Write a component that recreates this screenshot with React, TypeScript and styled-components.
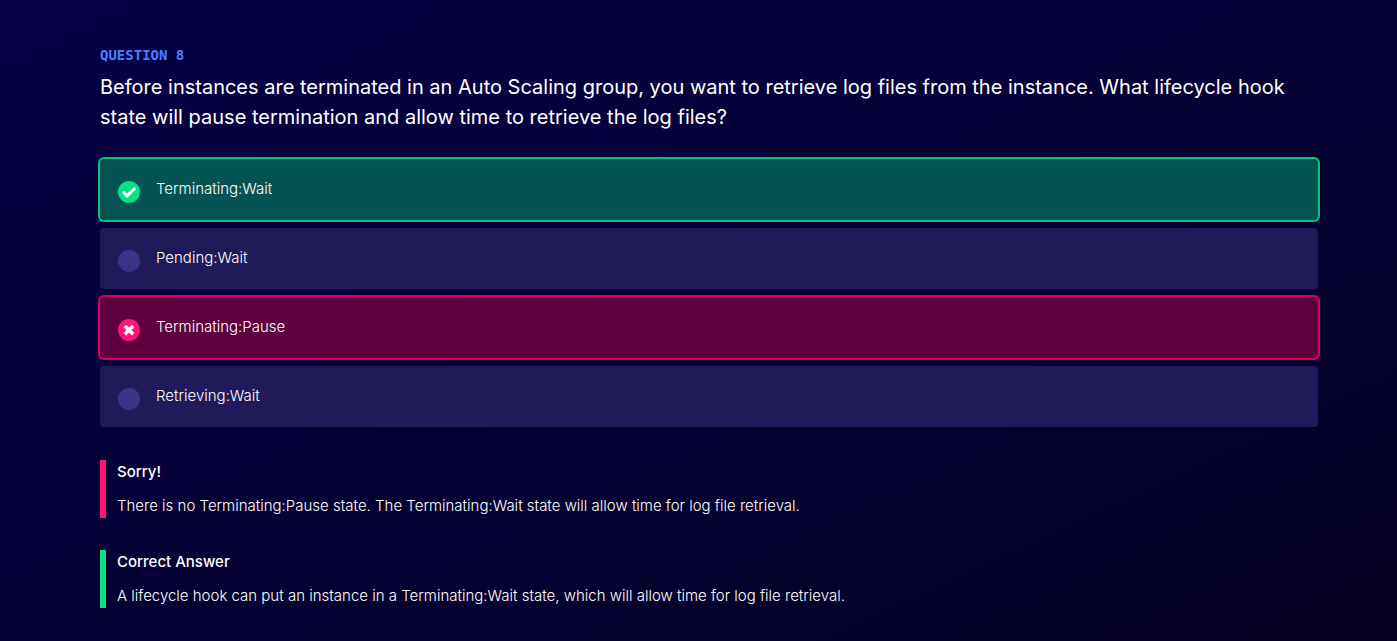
import React from "react";
import styled, { createGlobalStyle } from "styled-components";

type Status = "correct" | "wrong" | "idle";

const GlobalStyle = createGlobalStyle`
  *, *::before, *::after { box-sizing: border-box; }
  html { min-height: 100%; background: #04002b; }
  body { margin: 0; }
`;

const Page = styled.main`
  min-height: 100vh;
  padding: 44px 79px 33px 100px;
  color: #fff;
  font-family: Inter, "Liberation Sans", sans-serif;
  font-size: 15px;
  line-height: 24px;
  background: linear-gradient(155deg, #070048 0%, #04002f 65%, #030020 100%);
`;

const Eyebrow = styled.p`
  margin: 0 0 6px;
  color: #4580ff;
  font-family: "DejaVu Sans Mono", monospace;
  font-size: 14px;
  font-weight: 700;
  line-height: 22px;
  text-transform: uppercase;
`;

const Question = styled.h1`
  margin: 0 0 27px;
  font-size: 20px;
  font-weight: 400;
  line-height: 30px;
`;

const Answers = styled.div`
  display: flex;
  flex-direction: column;
  gap: 8px;
  margin-bottom: 33px;
`;

const rowFill = { correct: "#055453", wrong: "#5f0040", idle: "#201a5b" };
const rowEdge = { correct: "#05c47c", wrong: "#dc005c", idle: "transparent" };
const dotFill = { correct: "#05e28a", wrong: "#ff1478", idle: "#3d328a" };

const Answer = styled.label<{ $status: Status }>`
  display: flex;
  align-items: flex-start;
  gap: 16px;
  padding: 18px 18px 17px;
  border-radius: 4px;
  background: ${(p) => rowFill[p.$status]};
  box-shadow: 0 0 0 2px ${(p) => rowEdge[p.$status]};
`;

const Marker = styled.span`
  display: grid;
  place-items: center;
  margin-top: 4px;

  > * { grid-area: 1 / 1; }
`;

const Radio = styled.input<{ $status: Status }>`
  appearance: none;
  width: 22px;
  height: 22px;
  margin: 0;
  border-radius: 50%;
  background: ${(p) => dotFill[p.$status]};
`;

const Glyph = styled.svg`
  width: 22px;
  height: 22px;
  pointer-events: none;
  fill: none;
  stroke: #fff;
`;

const AnswerText = styled.span`
  font-weight: 300;
`;

const Note = styled.section<{ $status: Status }>`
  padding-left: 11px;
  border-left: 6px solid ${(p) => dotFill[p.$status]};

  & + & { margin-top: 32px; }
`;

const NoteTitle = styled.h2`
  margin: 0 0 10px;
  font-size: 15px;
  font-weight: 500;
  line-height: 24px;
`;

const NoteText = styled.p`
  margin: 0;
  font-weight: 300;
`;

const answers: { text: string; status: Status }[] = [
  { text: "Terminating:Wait", status: "correct" },
  { text: "Pending:Wait", status: "idle" },
  { text: "Terminating:Pause", status: "wrong" },
  { text: "Retrieving:Wait", status: "idle" },
];

function StatusGlyph({ status }: { status: Status }) {
  if (status === "correct") {
    return (
      <Glyph viewBox="0 0 22 22" aria-hidden="true">
        <path d="M5 10.8 9.2 14.8 17.3 7" strokeWidth="3" />
      </Glyph>
    );
  }
  if (status === "wrong") {
    return (
      <Glyph viewBox="0 0 22 22" aria-hidden="true">
        <path d="M6.9 7.1 15.1 15.3M15.1 7.1 6.9 15.3" strokeWidth="3.5" />
      </Glyph>
    );
  }
  return null;
}

export default function App() {
  return (
    <Page>
      <GlobalStyle />
      <Eyebrow>Question 8</Eyebrow>
      <Question id="question">
        Before instances are terminated in an Auto Scaling group, you want to
        retrieve log files from the instance. What lifecycle hook state will
        pause termination and allow time to retrieve the log files?
      </Question>
      <Answers role="radiogroup" aria-labelledby="question">
        {answers.map(({ text, status }) => (
          <Answer key={text} $status={status}>
            <Marker>
              <Radio
                type="radio"
                name="answer"
                value={text}
                defaultChecked={status === "wrong"}
                $status={status}
              />
              <StatusGlyph status={status} />
            </Marker>
            <AnswerText>{text}</AnswerText>
          </Answer>
        ))}
      </Answers>
      <Note $status="wrong">
        <NoteTitle>Sorry!</NoteTitle>
        <NoteText>
          There is no Terminating:Pause state. The Terminating:Wait state will
          allow time for log file retrieval.
        </NoteText>
      </Note>
      <Note $status="correct">
        <NoteTitle>Correct Answer</NoteTitle>
        <NoteText>
          A lifecycle hook can put an instance in a Terminating:Wait state,
          which will allow time for log file retrieval.
        </NoteText>
      </Note>
    </Page>
  );
}
